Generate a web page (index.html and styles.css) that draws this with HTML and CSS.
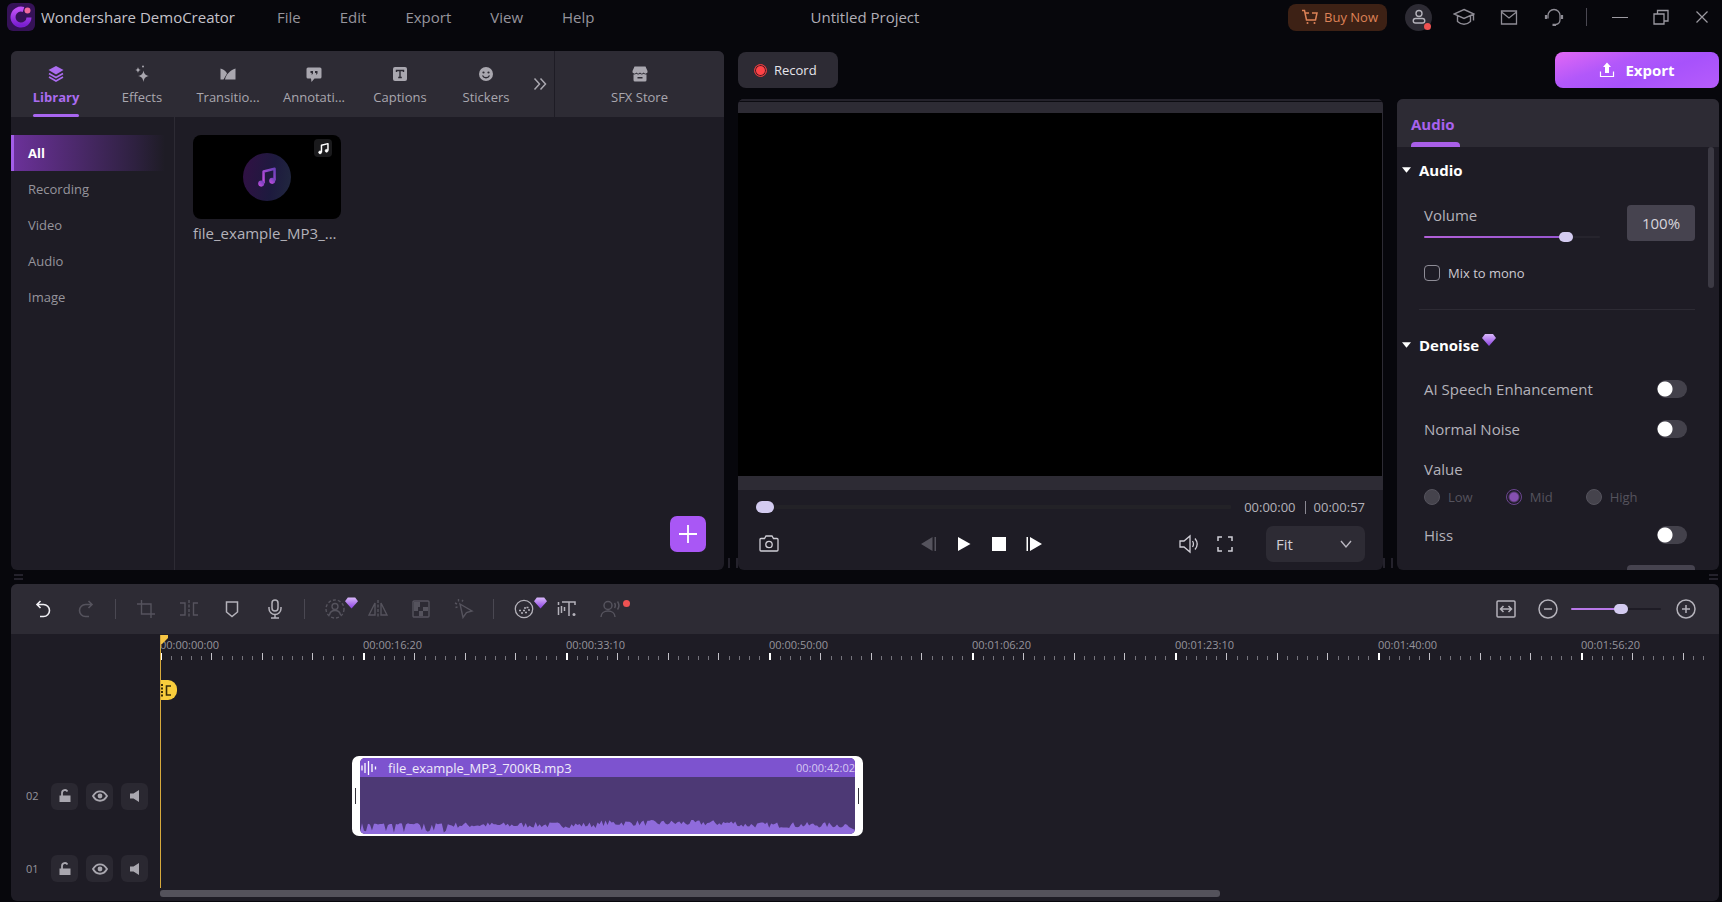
FILE: index.html
```html
<!DOCTYPE html>
<html lang="en">
<head>
<meta charset="utf-8">
<title>Wondershare DemoCreator</title>
<link rel="stylesheet" href="styles.css">
</head>
<body>
<svg class="defs" width="0" height="0" aria-hidden="true">
  <defs>
    <linearGradient id="gem-fill" x1="0" y1="0" x2="0" y2="1"><stop offset="0" stop-color="#d9b8fb"/><stop offset="1" stop-color="#8a3fe0"/></linearGradient>
    <linearGradient id="note-fill" x1="0" y1="1" x2="1" y2="0"><stop offset="0" stop-color="#c44ee0"/><stop offset="1" stop-color="#6a40b8"/></linearGradient>
    <linearGradient id="logo-fill" x1="0" y1="0" x2="0" y2="1"><stop offset="0" stop-color="#c050f5"/><stop offset="1" stop-color="#7a1fd0"/></linearGradient>
    <symbol id="gem" viewBox="0 0 14 12"><path d="M3 0h8l3 4-7 8-7-8z" fill="url(#gem-fill)"/></symbol>
    <symbol id="note" viewBox="0 0 16 16"><path d="M5.5 12.5V4l8-2v8.500" fill="none" stroke-width="1.800" stroke-linejoin="round"/><circle cx="3.800" cy="12.800" r="1.700"/><circle cx="11.800" cy="10.800" r="1.700"/></symbol>
    <symbol id="lock" viewBox="0 0 16 16"><path d="M2.500 7.500h11v6.500h-11z" fill="currentColor"/><path d="M5 8V5a3 3 0 0 1 5.500-1.600" fill="none" stroke="currentColor" stroke-width="1.800"/></symbol>
    <symbol id="eye" viewBox="0 0 16 16"><path d="M1 8c3.500-6.300 10.500-6.300 14 0-3.500 6.300-10.500 6.300-14 0z" fill="none" stroke="currentColor" stroke-width="1.800"/><circle cx="8" cy="8" r="2.400" fill="currentColor"/></symbol>
    <symbol id="speaker" viewBox="0 0 16 16"><path d="M3 5.500h3.500L12 2v12l-5.500-3.500H3z" fill="currentColor"/></symbol>
  </defs>
</svg>

<header class="titlebar">
  <div class="titlebar-left">
    <svg class="logo" viewBox="0 0 28 28"><rect width="28" height="28" rx="6" fill="#351257"/><path d="M16.500 6.500a8 8 0 1 0 5.500 8" fill="none" stroke="url(#logo-fill)" stroke-width="5"/><circle cx="20.500" cy="7.500" r="3" fill="#f16a9e"/></svg>
    <span class="app-name">Wondershare DemoCreator</span>
    <nav class="menu">
      <button>File</button><button>Edit</button><button>Export</button><button>View</button><button>Help</button>
    </nav>
  </div>
  <h1 class="project-name">Untitled Project</h1>
  <div class="titlebar-right">
    <button class="buy"><svg viewBox="0 0 16 16" width="16" height="16" fill="none" stroke="currentColor" stroke-width="1.500"><path d="M0 1.500h2.500L4.500 11h9l1.500-7h-5M3.500 4H7"/><circle cx="5.500" cy="14" r="1" fill="currentColor" stroke="none"/><circle cx="12.500" cy="14" r="1" fill="currentColor" stroke="none"/></svg>Buy Now</button>
    <button class="avatar" aria-label="Account"><svg viewBox="0 0 16 16" width="16" height="16" fill="none" stroke="currentColor" stroke-width="1.400"><circle cx="8" cy="4.500" r="3"/><path d="M4.500 9.500h7a2.200 2.200 0 0 1 0 4.500h-7a2.200 2.200 0 0 1 0-4.500z"/></svg><i class="dot"></i></button>
    <button class="tool" aria-label="Academy"><svg viewBox="0 0 22 20" width="22" height="20" fill="none" stroke="currentColor" stroke-width="1.400"><path d="M11 2.500l10 4.500-10 4.500L1 7zM4.500 9v5.500c4 3.500 9 3.500 13 0V9M20.500 7.500v6"/></svg></button>
    <button class="tool" aria-label="Messages"><svg viewBox="0 0 20 20" width="20" height="20" fill="none" stroke="currentColor" stroke-width="1.300"><path d="M2.500 4h15v13h-15zM2.500 5l7.500 6 7.500-6"/></svg></button>
    <button class="tool" aria-label="Support"><svg viewBox="0 0 20 20" width="20" height="20" fill="none" stroke="currentColor" stroke-width="1.300"><path d="M4 11.500V8.500a6 6 0 0 1 12 0v4c0 2.500-1.500 4.500-4 5"/><path d="M2 8v4M18 8v4M8.500 17.800h3.500" stroke-width="2.200"/></svg></button>
    <i class="rule"></i>
    <button class="win" aria-label="Minimize"><svg viewBox="0 0 16 16" width="16" height="16" stroke="currentColor"><path d="M0 8.500h16"/></svg></button>
    <button class="win" aria-label="Restore"><svg viewBox="0 0 16 16" width="16" height="16" fill="none" stroke="currentColor" stroke-width="1.300"><path d="M1 5h10v10H1zM4.500 5V1.500H15V12h-4"/></svg></button>
    <button class="win" aria-label="Close"><svg viewBox="0 0 16 16" width="16" height="16" stroke="currentColor" stroke-width="1.200"><path d="M2.500 2.500l11 11M13.500 2.500l-11 11"/></svg></button>
  </div>
</header>

<main class="workspace">
  <section class="panel library">
    <div class="library-tabs">
      <button class="tab active"><svg viewBox="0 0 18 18" width="18" height="18" fill="currentColor"><path d="M9 1l7.500 4L9 9.500 1.500 5z"/><path d="M2 8.500l7 4 7-4M2 12l7 4 7-4" fill="none" stroke="currentColor" stroke-width="1.600"/></svg><span>Library</span></button>
      <button class="tab"><svg viewBox="0 0 18 18" width="18" height="18" fill="currentColor"><path d="M10.500 5.500c.8 3.600 1.700 4.600 5.500 5.500-3.800.9-4.700 1.900-5.500 6-.8-4.100-1.700-5.100-5.500-6 3.800-.9 4.700-1.900 5.500-5.500z"/><path d="M5 2c.4 2 1 2.600 3 3-2 .4-2.600 1-3 3-.4-2-1-2.600-3-3 2-.4 2.600-1 3-3z"/><circle cx="10" cy="1.500" r="1"/></svg><span>Effects</span></button>
      <button class="tab"><svg viewBox="0 0 18 18" width="18" height="18" fill="currentColor"><path d="M1.500 3.500c4 1 5.500 3 6.500 5L4.500 14.500h-3zM16.500 3.500v11H6c1-5 5-9 10.500-11z"/></svg><span>Transitio...</span></button>
      <button class="tab"><svg viewBox="0 0 18 18" width="18" height="18"><path fill="currentColor" fill-rule="evenodd" d="M3 2.500h12a1.500 1.500 0 0 1 1.500 1.500v8a1.500 1.500 0 0 1-1.500 1.500H9.500L6.500 17l-.5-3.500H3A1.500 1.500 0 0 1 1.500 12V4A1.500 1.500 0 0 1 3 2.500zM5.500 6v2h1.200v2l1.300-1.500V6zM10 6v2h1.200v2l1.300-1.500V6z"/></svg><span>Annotati...</span></button>
      <button class="tab"><svg viewBox="0 0 18 18" width="18" height="18"><rect x="2" y="2" width="14" height="14" rx="2" fill="currentColor"/><path d="M5.500 7V5.500h7V7M9 5.500v7M7.200 12.500h3.600" fill="none" stroke="#2d2b34" stroke-width="1.400"/></svg><span>Captions</span></button>
      <button class="tab"><svg viewBox="0 0 18 18" width="18" height="18"><circle cx="9" cy="9" r="7" fill="currentColor"/><circle cx="6.500" cy="7.500" r="1.100" fill="#2d2b34"/><circle cx="11.500" cy="7.500" r="1.100" fill="#2d2b34"/><path d="M5.500 10.500c1.500 3 5.500 3 7 0" fill="none" stroke="#2d2b34" stroke-width="1.300"/></svg><span>Stickers</span></button>
      <button class="more" aria-label="More"><svg viewBox="0 0 14 14" width="14" height="14" fill="none" stroke="currentColor" stroke-width="1.500"><path d="M1.500 1.500L6.500 7l-5 5.500M7.500 1.500l5 5.500-5 5.500"/></svg></button>
      <button class="tab store"><svg viewBox="0 0 18 18" width="18" height="18" fill="currentColor"><path d="M3.500 1.500h11L16.500 6v1.500c-1.500 1.500-3 1.500-3.800 0-1.400 1.500-2.400 1.500-3.700 0-1.300 1.500-2.300 1.500-3.700 0-.8 1.500-2.300 1.500-3.800 0V6z"/><path fill-rule="evenodd" d="M2.500 9.500c1.200.2 2-.1 2.800-.7 1.300.9 2.500.9 3.700 0 1.200.9 2.400.9 3.700 0 .8.600 1.600.9 2.800.7V15a1.500 1.500 0 0 1-1.500 1.500H4A1.500 1.500 0 0 1 2.500 15zM6.500 12v1.500h5V12z"/></svg><span>SFX Store</span></button>
    </div>
    <div class="library-body">
      <nav class="categories">
        <button class="active">All</button><button>Recording</button><button>Video</button><button>Audio</button><button>Image</button>
      </nav>
      <div class="media">
        <figure class="media-item">
          <div class="thumb">
            <span class="disc"><svg width="22" height="22" fill="url(#note-fill)" stroke="url(#note-fill)"><use href="#note"/></svg></span>
            <span class="badge"><svg width="13" height="13" fill="#fff" stroke="#fff"><use href="#note"/></svg></span>
          </div>
          <figcaption>file_example_MP3_...</figcaption>
        </figure>
        <button class="add" aria-label="Add media"><svg viewBox="0 0 18 18" width="18" height="18" stroke="#fff" stroke-width="1.800"><path d="M9 0v18M0 9h18"/></svg></button>
      </div>
    </div>
  </section>

  <section class="center">
    <button class="record"><i></i>Record</button>
    <div class="panel preview">
      <div class="strip top"></div>
      <div class="screen"></div>
      <div class="strip"></div>
      <div class="controls">
        <div class="seek">
          <input type="range" class="range seek-range" min="0" max="57" value="0" aria-label="Position">
          <span class="time">00:00:00</span><i class="rule"></i><span class="time">00:00:57</span>
        </div>
        <div class="buttons">
          <button aria-label="Snapshot"><svg viewBox="0 0 20 20" width="20" height="20" fill="none" stroke="currentColor" stroke-width="1.300"><path d="M2 4.500h3.500L7 2h6l1.500 2.500H18a1 1 0 0 1 1 1V16a1 1 0 0 1-1 1H2a1 1 0 0 1-1-1V5.500a1 1 0 0 1 1-1z"/><circle cx="10" cy="10.500" r="3.200"/></svg></button>
          <div class="group transport">
            <button class="off" aria-label="Previous frame"><svg viewBox="0 0 16 16" width="16" height="16" fill="currentColor"><path d="M11.500 1v14L0 8zM13.500 1H15v14h-1.500z"/></svg></button>
            <button aria-label="Play"><svg viewBox="0 0 16 16" width="16" height="16" fill="currentColor"><path d="M2 1l12.500 7L2 15z"/></svg></button>
            <button aria-label="Stop"><svg viewBox="0 0 16 16" width="16" height="16" fill="currentColor"><path d="M1 1h14v14H1z"/></svg></button>
            <button aria-label="Next frame"><svg viewBox="0 0 16 16" width="16" height="16" fill="currentColor"><path d="M4 1v14l12-7zM.5 1H2v14H.5z"/></svg></button>
          </div>
          <div class="group output">
            <button aria-label="Volume"><svg viewBox="0 0 20 20" width="20" height="20" fill="none" stroke="currentColor" stroke-width="1.300"><path d="M1 7h4l6-5v16l-6-5H1zM13.500 7c1.300 2 1.300 4 0 6M16 4.500c2.800 3.500 2.800 7.500 0 11"/></svg></button>
            <button aria-label="Full screen"><svg viewBox="0 0 16 16" width="16" height="16" fill="none" stroke="currentColor" stroke-width="1.500"><path d="M1 5V1h4M11 1h4v4M15 11v4h-4M5 15H1v-4"/></svg></button>
            <div class="fit"><select aria-label="Zoom"><option>Fit</option></select><svg viewBox="0 0 12 12" width="12" height="12" fill="none" stroke="#b9b7c0" stroke-width="1.400"><path d="M1 3l5 6 5-6"/></svg></div>
          </div>
        </div>
      </div>
    </div>
  </section>

  <section class="side">
    <button class="export"><svg viewBox="0 0 16 16" width="16" height="16" fill="none" stroke="currentColor" stroke-width="1.200"><path d="M1.500 9.500v5h13v-5"/><path d="M8 .5L12 5H10v6H6V5H4z" fill="currentColor" stroke="none"/></svg>Export</button>
    <div class="panel props">
      <div class="props-tabs"><button class="active">Audio</button></div>
      <div class="props-body">
        <h2><svg viewBox="0 0 10 6" width="9" height="6"><path d="M0 0h10L5 6z" fill="#fff"/></svg>Audio</h2>
        <div class="volume">
          <div class="volume-slider"><label for="vol">Volume</label><input id="vol" type="range" class="range volume-range" min="0" max="120" value="100"></div>
          <input type="text" class="value" value="100%" aria-label="Volume value">
        </div>
        <label class="check"><input type="checkbox">Mix to mono</label>
        <hr>
        <h2><svg viewBox="0 0 10 6" width="9" height="6"><path d="M0 0h10L5 6z" fill="#fff"/></svg>Denoise<svg class="gem" width="14" height="12"><use href="#gem"/></svg></h2>
        <label class="switch-row">AI Speech Enhancement<input type="checkbox" class="switch"></label>
        <label class="switch-row">Normal Noise<input type="checkbox" class="switch"></label>
        <div class="switch-row">Value</div>
        <div class="radios">
          <label><input type="radio" name="level" disabled>Low</label>
          <label><input type="radio" name="level" checked disabled>Mid</label>
          <label><input type="radio" name="level" disabled>High</label>
        </div>
        <label class="switch-row">Hiss<input type="checkbox" class="switch"></label>
        <div class="noise-row"><label for="nv">Noise Value</label><input id="nv" type="text" class="value" value=""></div>
      </div>
      <i class="scroll"></i>
    </div>
  </section>
</main>

<div class="splitter"><i></i><i></i></div>

<section class="panel timeline">
  <div class="toolbar">
    <div class="tools">
      <button class="lit" aria-label="Undo"><svg viewBox="0 0 20 20" fill="none" stroke="currentColor" stroke-width="1.600"><path d="M7.500 2L4 5.500 7.500 9M4 5.500h6.500a5.500 5.500 0 0 1 0 12H7"/></svg></button>
      <button aria-label="Redo"><svg viewBox="0 0 20 20" fill="none" stroke="currentColor" stroke-width="1.600"><path d="M12.500 2L16 5.500 12.500 9M16 5.500H9.500a5.500 5.500 0 0 0 0 12H13"/></svg></button>
      <i class="rule"></i>
      <button aria-label="Crop"><svg viewBox="0 0 20 20" fill="none" stroke="currentColor" stroke-width="1.400"><path d="M5.500 1v14H19M1 5h14v14"/></svg></button>
      <button aria-label="Split"><svg viewBox="0 0 20 20" fill="none" stroke="currentColor" stroke-width="1.400"><path d="M1 4h5v12H1M19 4h-4.500v12H19"/><path d="M10 1v18" stroke-dasharray="3 1.500"/></svg></button>
      <button class="on" aria-label="Marker"><svg viewBox="0 0 20 20" fill="none" stroke="currentColor" stroke-width="1.500"><path d="M4.500 3h11v10L10 17.500 4.500 13z"/></svg></button>
      <button class="on" aria-label="Voice over"><svg viewBox="0 0 20 20" fill="none" stroke="currentColor" stroke-width="1.500"><rect x="7" y="1" width="6" height="11" rx="3"/><path d="M4 8v1.500a6 6 0 0 0 12 0V8M10 15.500V19M6 19h8"/></svg></button>
      <i class="rule"></i>
      <button aria-label="Cutout"><svg viewBox="0 0 20 20" fill="none" stroke="currentColor" stroke-width="1.400"><circle cx="10" cy="10" r="9" stroke-dasharray="3 2"/><circle cx="10" cy="7.500" r="3"/><path d="M4.500 16c1-6 10-6 11 0"/></svg><svg class="gem"><use href="#gem"/></svg></button>
      <button aria-label="Mirror"><svg viewBox="0 0 20 20" fill="none" stroke="currentColor" stroke-width="1.400"><path d="M7 4v12H1zM13 4v12h6z"/><path d="M10 1v18" stroke-dasharray="3 1.500"/></svg></button>
      <button aria-label="Mosaic"><svg viewBox="0 0 20 20" fill="none" stroke="currentColor" stroke-width="1.400"><rect x="2" y="2" width="16" height="16" rx="1"/><path d="M3 3h6v5H7v4H3zM11 8h6v0zM8 12h4v5H8zM12 8h5v4h-5z" fill="currentColor" stroke="none"/></svg></button>
      <button aria-label="Cursor"><svg viewBox="0 0 20 20" fill="none" stroke="currentColor" stroke-width="1.400"><path d="M6 5l12 7-5.500 1.500L9 18.500zM1 4l2 1M4.500 0v2.500M1.500 8.500l2-.5M9 1L8 2.500"/></svg></button>
      <i class="rule"></i>
      <button class="on" aria-label="Face mosaic"><svg viewBox="0 0 20 20" fill="none" stroke="currentColor" stroke-width="1.300"><circle cx="10" cy="10" r="8.700"/><path d="M5 11.500h2M9 11.500h2M12.500 8.500h2M7 14h2M11 13.500h2M10 9h2M14 11h2" stroke-width="1.500"/></svg><svg class="gem"><use href="#gem"/></svg></button>
      <button class="on" aria-label="Speech to text"><svg viewBox="0 0 20 20" fill="none" stroke="currentColor" stroke-width="1.500"><path d="M1.500 3v3M1.500 8v8M4.500 7v7M7.500 8v4M5 3h13v3M12 3v14"/><circle cx="17" cy="15.500" r="1.500" fill="currentColor" stroke="none"/></svg></button>
      <button aria-label="Text to speech"><svg viewBox="0 0 20 20" fill="none" stroke="currentColor" stroke-width="1.500"><circle cx="8" cy="6.500" r="4"/><path d="M1 18c0-8 14-8 14 0M14.500 4c1 1.500 1 3.500 0 5M17.500 2.500c1.800 2.500 1.800 5.500 0 8"/></svg><i class="dot"></i></button>
    </div>
    <div class="zoom">
      <button class="on" aria-label="Fit timeline"><svg viewBox="0 0 20 20" fill="none" stroke="currentColor" stroke-width="1.500"><rect x="1" y="2" width="18" height="16" rx="1"/><path d="M5 10h10M7.500 7L4.500 10l3 3M12.500 7l3 3-3 3"/></svg></button>
      <button class="on" aria-label="Zoom out"><svg viewBox="0 0 20 20" fill="none" stroke="currentColor" stroke-width="1.500"><circle cx="10" cy="10" r="9"/><path d="M6 10h8"/></svg></button>
      <input type="range" class="range zoom-range" min="0" max="100" value="56" aria-label="Timeline zoom">
      <button class="on" aria-label="Zoom in"><svg viewBox="0 0 20 20" fill="none" stroke="currentColor" stroke-width="1.500"><circle cx="10" cy="10" r="9"/><path d="M6 10h8M10 6v8"/></svg></button>
    </div>
  </div>
  <div class="timeline-body">
    <div class="heads">
      <div class="head"><span>02</span><button aria-label="Lock track 02"><svg><use href="#lock"/></svg></button><button aria-label="Show track 02"><svg><use href="#eye"/></svg></button><button aria-label="Mute track 02"><svg><use href="#speaker"/></svg></button></div>
      <div class="head last"><span>01</span><button aria-label="Lock track 01"><svg><use href="#lock"/></svg></button><button aria-label="Show track 01"><svg><use href="#eye"/></svg></button><button aria-label="Mute track 01"><svg><use href="#speaker"/></svg></button></div>
    </div>
    <div class="lanes">
      <div class="ruler">
        <div class="span"><span>00:00:00:00</span></div><div class="span"><span>00:00:16:20</span></div><div class="span"><span>00:00:33:10</span></div><div class="span"><span>00:00:50:00</span></div><div class="span"><span>00:01:06:20</span></div><div class="span"><span>00:01:23:10</span></div><div class="span"><span>00:01:40:00</span></div><div class="span"><span>00:01:56:20</span></div>
      </div>
      <div class="marker-lane"><span class="marker"><svg viewBox="0 0 17 20" width="17" height="20" fill="none" stroke="#3a2c08" stroke-width="1.600"><path d="M2 4v13" stroke-width="2" stroke-dasharray="2 1.500"/><path d="M11 6H6.500v9H11"/></svg></span></div>
      <div class="lane">
        <div class="clip">
          <div class="clip-inner">
            <div class="clip-title">
              <svg viewBox="0 0 16 16" width="16" height="16" stroke="#fff" stroke-width="1.300"><path d="M1 5.500v5M4 3v10M7.500 1v14M11 4v8M14.500 6.500v3"/></svg>
              <span class="clip-name">file_example_MP3_700KB.mp3</span>
              <span class="clip-time">00:00:42:02</span>
            </div>
            <svg class="wave" viewBox="0 0 248 16" preserveAspectRatio="none"><path id="wave" fill="#8f6bdb"/></svg>
          </div>
        </div>
      </div>
      <div class="lane last"></div>
      <div class="playhead"><svg viewBox="0 0 7 9" width="7" height="9"><path d="M0 0h7v3L1 9H0z" fill="#f6c544"/></svg></div>
      <i class="hscroll"></i>
    </div>
  </div>
</section>
<script src="app.js"></script>
</body>
</html>
```

FILE: app.js
```js
// Twenty ticks per labelled span; every fifth one is tall.
document.querySelectorAll('.span').forEach(function (span) {
  var ticks = document.createElement('div');
  ticks.className = 'ticks';
  for (var i = 0; i < 20; i++) ticks.appendChild(document.createElement('i'));
  span.appendChild(ticks);
});

// Waveform silhouette: deep gaps between peaks first, denser later in the clip.
var seed = 7, d = 'M0 16';
for (var x = 0; x <= 248; x++) {
  seed = (seed * 16807) % 2147483647;
  var r = seed / 2147483647;
  var h = x < 45 ? (r > 0.35 ? 8 + r * 3 : 1 + r * 8)
    : 6 + r * 6 + (x > 120 && x < 190 ? 2 : 0);
  if (x > 244) h = 8 - (x - 244);
  d += 'L' + x + ' ' + (16 - h).toFixed(1);
}
document.getElementById('wave').setAttribute('d', d + 'L248 16Z');
```

FILE: styles.css
```css
* { box-sizing: border-box; }
body {
  margin: 0;
  height: 100vh;
  display: flex;
  flex-direction: column;
  padding-bottom: 1px;
  overflow: hidden;
  background: #07070c;
  color: #b4b2ba;
  font: 15px/20px "Open Sans", "Noto Sans", sans-serif;
}
button, input, select { font: inherit; color: inherit; }
button { padding: 0; border: 0; background: none; }
button svg { display: block; flex: none; }
h1, h2, figure { margin: 0; font: inherit; }
.defs { position: absolute; }
.panel { background: #1e1c25; border-radius: 6px; overflow: hidden; }
.rule { width: 1px; background: #4a4852; flex: none; }
.dot { position: absolute; width: 7px; height: 7px; border-radius: 50%; background: #ee5252; }

/* Title bar */
.titlebar {
  display: grid;
  grid-template-columns: 1fr auto 1fr;
  align-items: center;
  height: 34px;
  padding-left: 8px;
  flex: none;
}
.titlebar-left, .titlebar-right, .menu { display: flex; align-items: center; }
.logo { width: 28px; height: 28px; margin: 0 6px 0 -1px; }
.app-name { color: #c4c2ca; white-space: nowrap; }
.menu { margin-left: 42px; gap: 39px; color: #96949c; }
.project-name { color: #b0aeb6; }
.titlebar-right { justify-content: flex-end; padding-right: 12px; color: #9c9aa2; }
.buy {
  display: flex; align-items: center; gap: 6px;
  height: 27px; padding: 0 9px 0 14px; margin-right: 18px;
  border-radius: 8px; background: #3d2115; color: #dd8257; font-size: 13px;
}
.avatar {
  position: relative; display: grid; place-items: center;
  width: 27px; height: 27px; margin-right: 21px;
  border-radius: 50%; background: #2d2b34; color: #b4b2ba;
}
.avatar .dot { right: 1px; bottom: 1px; }
.tool { width: 22px; margin-right: 23px; display: grid; place-items: center; color: #8e8c95; }
.titlebar-right .rule { height: 18px; margin: 0 25px 0 -2px; }
.win { width: 16px; margin-right: 25px; }
.win:last-child { margin-right: 0; }

/* Workspace */
.workspace {
  flex: 1;
  min-height: 0;
  display: grid;
  grid-template-columns: minmax(0, 713fr) minmax(0, 645fr) 322px;
  gap: 14px;
  padding: 17px 3px 0 11px;
}
.library, .center, .side, .preview, .props { display: flex; flex-direction: column; min-height: 0; }
.library-tabs { display: flex; height: 66px; padding-left: 2px; flex: none; background: #2d2b34; }
.tab {
  position: relative;
  display: flex; flex-direction: column; align-items: center; gap: 4px;
  width: 86px; padding-top: 14px; flex: none;
  font-size: 13px; color: #a9a7af;
}
.tab.active { color: #ab6cf0; font-weight: 700; }
.tab.active::after {
  content: ""; position: absolute; bottom: 0; width: 46px; height: 3px;
  border-radius: 2px; background: #a866f0;
}
.more { width: 25px; padding-right: 3px; flex: none; display: grid; place-items: center; color: #a9a7af; }
.store { flex: 1; border-left: 1px solid #1e1c25; }
.library-body { flex: 1; display: flex; min-height: 0; }
.categories { width: 164px; padding: 18px 9px 0 0; border-right: 1px solid #2d2b34; }
.categories button {
  display: block; width: 100%; height: 36px; padding-left: 17px;
  text-align: left; font-size: 13px; color: #96949c;
}
.categories .active {
  padding-left: 14px; border-left: 3px solid #a35ee8;
  background: linear-gradient(90deg, #6b3199, #2e2140 80%, #1e1c25);
  color: #fff; font-weight: 700;
}
.media { flex: 1; position: relative; padding: 18px; }
.media-item { width: 148px; }
.thumb { position: relative; display: grid; place-items: center; height: 84px; border-radius: 8px; background: #000; }
.disc {
  display: grid; place-items: center; width: 48px; height: 48px; border-radius: 50%;
  background: linear-gradient(100deg, #321044, #1d1a3e 60%, #21283f);
}
.badge {
  position: absolute; top: 4px; right: 9px;
  display: grid; place-items: center; width: 18px; height: 18px; border-radius: 4px; background: #1a1a1c;
}
.media-item figcaption { margin-top: 4px; white-space: nowrap; }
.add {
  position: absolute; right: 18px; bottom: 18px;
  display: grid; place-items: center; width: 36px; height: 36px;
  border-radius: 7px; background: #a957f5;
}

/* Grips between the panels */
.center { position: relative; }
.center::before, .center::after {
  content: ""; position: absolute; bottom: 2px; left: -10px; width: 6px; height: 10px;
  border: solid #24222c; border-width: 0 2px;
}
.center::after { left: auto; right: -10px; }
.splitter { display: flex; justify-content: space-between; align-items: center; height: 14px; padding: 0 4px 0 14px; flex: none; }
.splitter i { width: 9px; height: 6px; border: solid #24222c; border-width: 2px 0; }

/* Sliders */
.range { appearance: none; height: 14px; margin: 0; min-width: 0; background: none; }
.range::-webkit-slider-runnable-track { height: 2px; border-radius: 1px; background: #2a2931; }
.range::-webkit-slider-thumb {
  appearance: none; width: 14px; height: 10px; margin-top: -4px;
  border-radius: 5px; background: #d3cbf0;
}

/* Preview */
.record {
  display: flex; align-items: center; gap: 7px; align-self: flex-start;
  height: 36px; padding: 0 21px 0 16px; margin: 1px 0 11px; flex: none;
  border-radius: 8px; background: #2d2b34; color: #e6e5ea; font-size: 13px;
}
.record i {
  width: 13px; height: 13px; border-radius: 50%;
  border: 1px solid #e03a3e; background: #ff4347; box-shadow: inset 0 0 0 1px #4a1c22;
}
.preview { flex: 1; }
.strip { height: 14px; flex: none; background: #2d2b34; }
.strip.top { border-top: 2px solid #24222b; box-shadow: inset 0 1px #0c0b11; }
.screen { flex: 1; background: #000; border-right: 1px solid #2d2b34; }
.controls { padding: 7px 18px 8px; flex: none; }
.seek { display: flex; align-items: center; height: 20px; font-size: 13px; }
.seek .rule { height: 13px; margin: 0 8px 0 9px; background: #8a8892; }
.seek-range { flex: 1; margin-right: 13px; }
.seek-range::-webkit-slider-runnable-track { height: 4px; background: #232227; }
.seek-range::-webkit-slider-thumb { width: 18px; height: 12px; border-radius: 6px; }
.buttons { display: flex; align-items: center; justify-content: space-between; margin: 9px 0 0 3px; color: #d0ced6; }
.group { display: flex; align-items: center; }
.transport { gap: 19px; margin-left: 5px; color: #fff; }
.off { color: #55535d; }
.output { gap: 18px; }
.fit { position: relative; display: flex; align-items: center; margin-left: 15px; }
.fit select {
  appearance: none; width: 99px; height: 36px; padding: 0 10px;
  border: 0; border-radius: 7px; background: #2d2b34; color: #d0ced6;
}
.fit svg { position: absolute; right: 13px; pointer-events: none; }

/* Properties */
.export {
  display: flex; align-items: center; justify-content: center; gap: 10px; align-self: flex-end;
  width: 164px; height: 36px; margin: 1px 0 11px; flex: none;
  border-radius: 8px; color: #fff; font-weight: 700;
  background: linear-gradient(160deg, #e268f5, #b258fa 35%, #a752fb 60%, #b65cfb);
}
.props { flex: 1; position: relative; }
.props-tabs { display: flex; height: 48px; padding-left: 14px; flex: none; background: #2d2b34; }
.props-tabs .active {
  position: relative; padding: 2px 5px 0 0; font-weight: 700; color: #a862ee;
}
.props-tabs .active::after {
  content: ""; position: absolute; left: 0; right: 0; bottom: 0; height: 5px;
  border-radius: 4px 4px 0 0; background: #a95fe8;
}
.props-body { flex: 1; min-height: 0; overflow: hidden; padding: 13px 24px 0 5px; }
.props-body > * { margin-left: 22px; }
.props-body h2 { display: flex; align-items: center; gap: 8px; margin-left: 0; color: #fff; font-weight: 700; }
.props-body h2 .gem { margin: -10px 0 0 -5px; }
.volume { display: flex; align-items: center; justify-content: space-between; margin-top: 24px; height: 38px; }
.volume-slider { display: flex; flex-direction: column; gap: 5px; padding-top: 3px; }
.volume-range { width: 176px; }
.volume-range::-webkit-slider-runnable-track { background: linear-gradient(90deg, #b260d8, #9656d0) 0 0 / 80% 100% no-repeat #26242d; }
.value {
  width: 68px; height: 36px; flex: none; padding: 0;
  border: 0; border-radius: 4px; background: #46434f; text-align: center; color: #d6d4dc;
}
.check { display: flex; align-items: center; gap: 8px; margin-top: 21px; font-size: 13px; color: #cccad2; }
.check input { appearance: none; width: 16px; height: 16px; margin: 0; border: 1px solid #8e8c96; border-radius: 4px; }
.props-body hr { height: 1px; margin: 26px 0 25px 17px; border: 0; background: #2d2b34; }
.switch-row { display: flex; align-items: center; justify-content: space-between; height: 20px; margin-top: 20px; padding-right: 8px; }
h2 + .switch-row { margin-top: 24px; }
.switch {
  appearance: none; width: 30px; height: 18px; margin: 0; border-radius: 9px;
  background: radial-gradient(circle at 8px 9px, #fff 7px, #43414b 8px);
}
.radios { display: flex; gap: 33px; margin-top: 8px; font-size: 13px; color: #55535d; }
.radios label { display: flex; align-items: center; gap: 8px; }
.radios input { appearance: none; width: 16px; height: 16px; margin: 0; border: 1px solid #55535d; border-radius: 50%; background: #45434c; }
.radios input:checked { background: radial-gradient(circle, #8650b0 4px, #1e1c25 6px); border-color: #6b4590; }
.radios + .switch-row { margin-top: 18px; }
.noise-row { display: flex; justify-content: space-between; margin-top: 20px; }
.scroll { position: absolute; right: 5px; top: 48px; width: 6px; height: 141px; border-radius: 3px; background: #3c3a44; }

/* Timeline */
.timeline { margin: 0 3px 0 11px; flex: none; }
.toolbar { display: flex; justify-content: space-between; height: 50px; padding: 0 22px 0 10px; background: #2d2b34; }
.tools, .zoom { display: flex; align-items: center; }
.toolbar .rule { height: 20px; margin: 0 8px; }
.toolbar button { position: relative; display: grid; place-items: center; width: 43px; height: 48px; color: #55535d; }
.toolbar button svg { width: 20px; height: 20px; }
.toolbar .on { color: #b4b2ba; }
.toolbar .lit { color: #f0eff4; }
.toolbar button .gem { position: absolute; left: 32px; top: 12px; width: 13px; height: 12px; }
.toolbar button .dot { left: 35px; top: 15px; }
.zoom button:last-child { width: 22px; }
.zoom button:nth-child(2) { width: 22px; margin-left: 10px; }
.zoom-range { width: 90px; margin: 0 14px 0 12px; }
.zoom-range::-webkit-slider-runnable-track { background: linear-gradient(90deg, #b878e8, #b878e8) 0 0 / 50% 100% no-repeat #1e1c25; }
.timeline-body { display: flex; }
.heads { width: 149px; padding-top: 122px; flex: none; }
.head { display: flex; align-items: center; gap: 8px; height: 80px; padding-left: 15px; font-size: 11px; color: #96949c; }
.head span { width: 17px; }
.head button { display: grid; place-items: center; width: 27px; height: 27px; border-radius: 6px; background: #2a2831; color: #a9a7af; }
.head button svg { width: 16px; height: 16px; }
.head.last, .lane.last { height: 65px; }
.lanes { flex: 1; min-width: 0; position: relative; }
.ruler { display: flex; height: 28px; margin-right: 8px; overflow: hidden; }
.span { width: 203px; flex: none; padding-top: 2px; font-size: 11px; line-height: 17px; color: #96949c; }
.ticks { display: flex; align-items: flex-end; height: 7px; }
.ticks i { flex: 1; height: 4px; border-left: 1px solid #75737c; }
.ticks i:nth-child(5n + 1) { height: 7px; border-color: #c4c2ca; }
.ticks i:first-child { border-left: 2px solid #fff; }
.marker-lane { height: 94px; padding-top: 18px; }
.marker { display: block; width: 17px; height: 20px; border-radius: 0 9px 9px 0; background: #f9cd3c; }
.lane { height: 80px; }
.clip { width: 511px; height: 80px; margin-left: 192px; padding: 2px 8px; border-radius: 7px; background: #fff; position: relative; }
.clip::before, .clip::after { content: ""; position: absolute; top: 32px; left: 3px; width: 1px; height: 16px; background: #33313a; }
.clip::after { left: auto; right: 4px; }
.clip-inner { display: flex; flex-direction: column; height: 100%; border-radius: 5px; overflow: hidden; background: #4d3975; }
.clip-title { display: flex; align-items: center; height: 19px; padding-left: 1px; background: #7d53cf; color: #f0ebfa; font-size: 13px; }
.clip-name { margin-left: 11px; }
.clip-time { margin-left: auto; font-size: 11px; color: #d6c8f2; }
.wave { width: 100%; height: 16px; margin-top: auto; }
.playhead { position: absolute; top: 1px; bottom: 13px; left: 0; border-left: 1px solid #d6a93c; }
.playhead svg { display: block; }
.hscroll { position: absolute; left: 0; bottom: 4px; width: 68%; height: 7px; border-radius: 3px; background: #54525b; }
```
